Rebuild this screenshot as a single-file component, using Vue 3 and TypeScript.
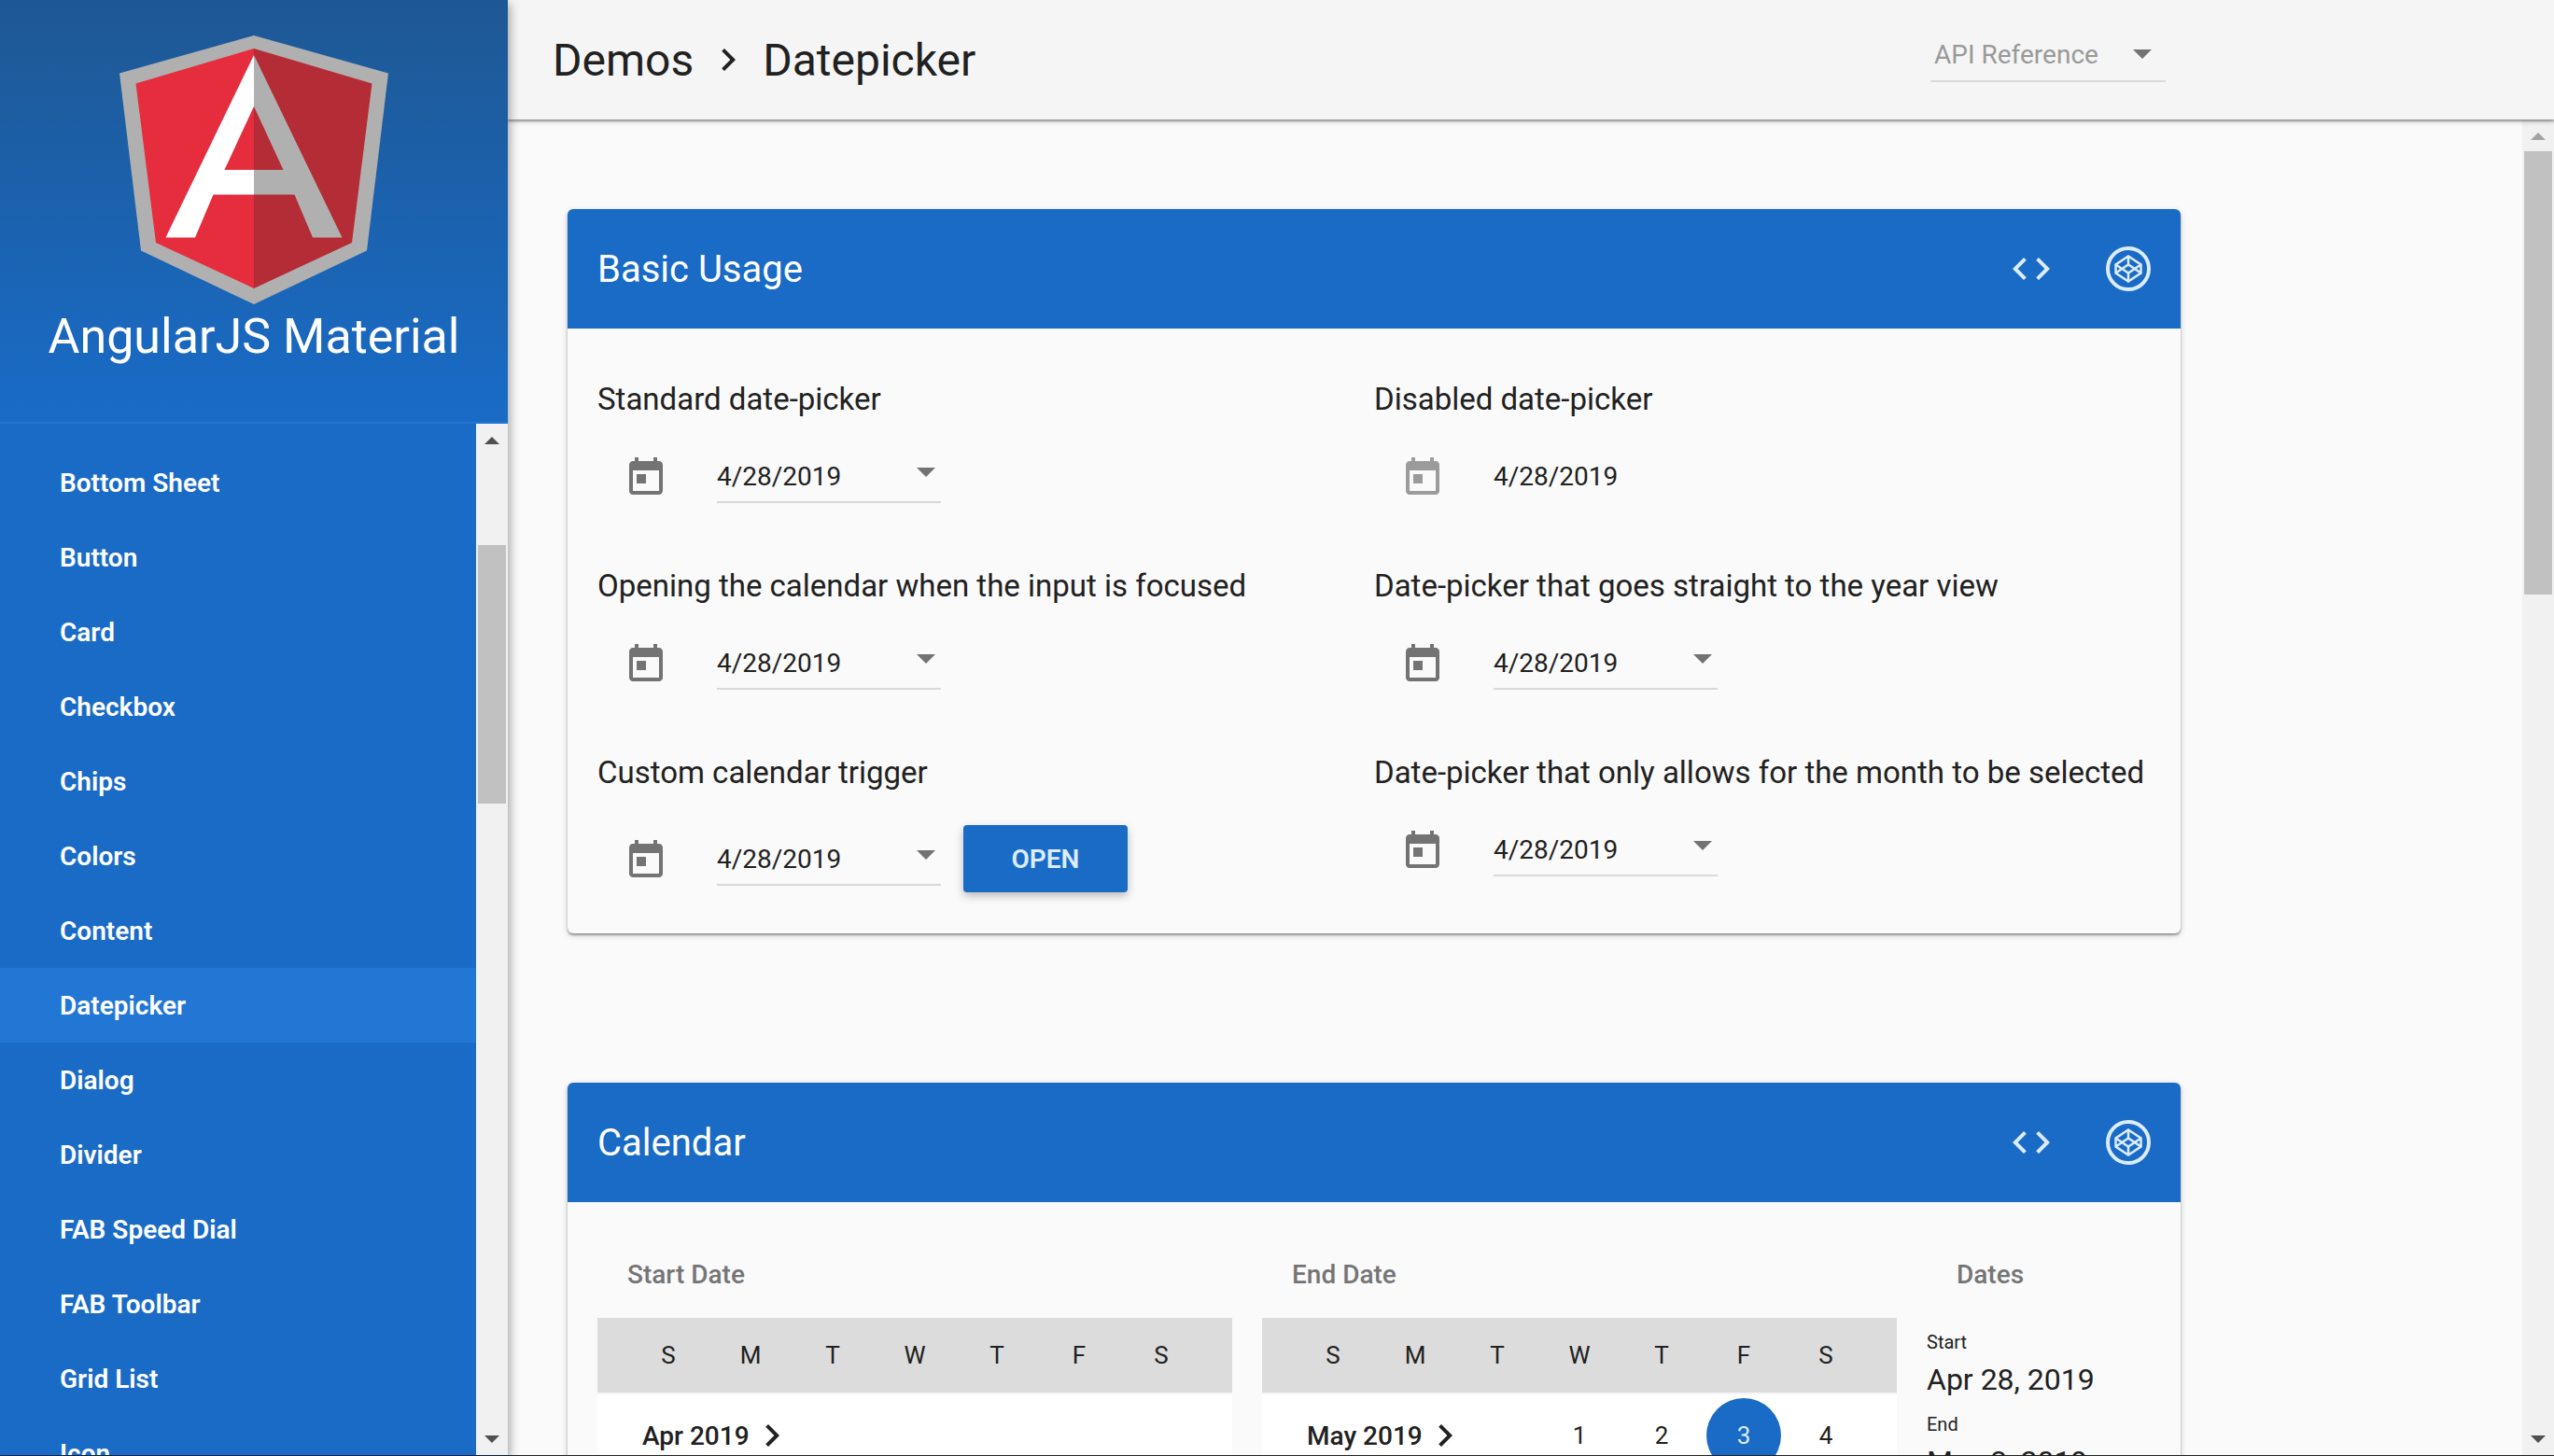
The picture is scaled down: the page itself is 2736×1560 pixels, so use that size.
<script setup lang="ts">
import { ref } from 'vue'

interface Picker {
  id: string
  label: string
  disabled?: boolean
  trigger?: boolean
}

interface MonthPanel {
  title: string
  month: string
  days: number[]
  selected?: number
}

const components = [
  'Bottom Sheet', 'Button', 'Card', 'Checkbox', 'Chips', 'Colors', 'Content', 'Datepicker',
  'Dialog', 'Divider', 'FAB Speed Dial', 'FAB Toolbar', 'Grid List', 'Icon',
]
const active = 'Datepicker'

const pickers: Picker[] = [
  { id: 'standard', label: 'Standard date-picker' },
  { id: 'disabled', label: 'Disabled date-picker', disabled: true },
  { id: 'focus', label: 'Opening the calendar when the input is focused' },
  { id: 'year', label: 'Date-picker that goes straight to the year view' },
  { id: 'custom', label: 'Custom calendar trigger', trigger: true },
  { id: 'month', label: 'Date-picker that only allows for the month to be selected' },
]
const date = ref('4/28/2019')

const weekdays = ['S', 'M', 'T', 'W', 'T', 'F', 'S']
const months: MonthPanel[] = [
  { title: 'Start Date', month: 'Apr 2019', days: [] },
  { title: 'End Date', month: 'May 2019', days: [1, 2, 3, 4], selected: 3 },
]
const range = [
  { term: 'Start', value: 'Apr 28, 2019' },
  { term: 'End', value: 'May 3, 2019' },
]
</script>

<template>
  <div class="app">
    <div class="shell">
      <aside class="sidenav">
        <header class="brand">
          <svg class="logo" viewBox="0 0 288 288" aria-hidden="true">
            <path fill="#b0b0b0" d="M144 0 288 40.500 265 230.500 144 288 23 230.500 0 40.500z" />
            <path fill="#e52d3d" d="M144 14 17.500 51.500 39 222 144 271z" />
            <path fill="#b42c35" d="M144 14 270.500 51.500 249 222 144 271z" />
            <path fill="#fff" d="M144 21 49.500 216.500H81L100.500 170.500H144V144H112.500L144 76z" />
            <path fill="#b0b0b0" d="M144 21 238.500 216.500H207L187.500 170.500H144V144H175.500L144 76z" />
          </svg>
          <h1>AngularJS Material</h1>
        </header>
        <div class="menu">
          <nav class="links">
            <a v-for="name in components" :key="name" href="#" :class="{ active: name === active }">{{ name }}</a>
          </nav>
          <div class="scrollbar">
            <svg class="tip" viewBox="0 0 34 34" aria-hidden="true"><path fill="#505050" d="M9 22 17 14 25 22z" /></svg>
            <div class="track">
              <div class="thumb menu-thumb"></div>
            </div>
            <svg class="tip" viewBox="0 0 34 34" aria-hidden="true"><path fill="#505050" d="M9 13H25L17 21z" /></svg>
          </div>
        </div>
      </aside>

      <main class="main">
        <header class="toolbar">
          <h2 class="crumbs">
            <span>Demos</span>
            <svg class="icon" viewBox="0 0 24 24" aria-hidden="true"><path d="M10 6 8.590 7.410 13.170 12l-4.580 4.590L10 18l6-6z" /></svg>
            <span>Datepicker</span>
          </h2>
          <div class="api">
            <select aria-label="API Reference">
              <option>API Reference</option>
            </select>
            <svg class="caret" viewBox="0 0 20 10" aria-hidden="true"><path d="M0 0H20L10 10z" /></svg>
          </div>
        </header>

        <div class="scroller">
          <div class="content">
            <section class="card">
              <header class="card-head">
                <h3>Basic Usage</h3>
                <button type="button" class="tool" aria-label="View source">
                  <svg class="icon" viewBox="0 0 24 24" aria-hidden="true"><path d="M9.400 16.600 4.800 12l4.600-4.600L8 6l-6 6 6 6zm5.200 0 4.600-4.600-4.600-4.600L16 6l6 6-6 6z" /></svg>
                </button>
                <button type="button" class="tool" aria-label="Edit on CodePen">
                  <svg class="icon line" viewBox="0 0 48 48" aria-hidden="true">
                    <circle cx="24" cy="24" r="22" stroke-width="4" />
                    <path stroke-width="2.500" d="M24 10.500 37.500 19.500V28.500L24 37.500 10.500 28.500V19.500zM24 10.500V19.500M24 28.500V37.500M10.500 19.500 24 28.500 37.500 19.500M10.500 28.500 24 19.500 37.500 28.500" />
                  </svg>
                </button>
              </header>
              <div class="pickers">
                <div v-for="p in pickers" :key="p.id" class="cell">
                  <label :for="p.id">{{ p.label }}</label>
                  <div class="picker-row">
                    <div class="picker">
                      <button type="button" class="cal" :disabled="p.disabled" :aria-label="`Open calendar: ${p.label}`">
                        <svg class="icon" viewBox="0 0 24 24" aria-hidden="true"><path d="M19 3h-1V1h-2v2H8V1H6v2H5c-1.110 0-1.990.9-1.990 2L3 19c0 1.100.890 2 2 2h14c1.100 0 2-.9 2-2V5c0-1.100-.9-2-2-2zm0 16H5V8h14v11zM7 10h5v5H7z" /></svg>
                      </button>
                      <div class="field" :class="{ off: p.disabled }">
                        <input :id="p.id" v-model="date" type="text" :disabled="p.disabled" />
                        <svg v-if="!p.disabled" class="caret" viewBox="0 0 20 10" aria-hidden="true"><path d="M0 0H20L10 10z" /></svg>
                      </div>
                    </div>
                    <button v-if="p.trigger" type="button" class="open">OPEN</button>
                  </div>
                </div>
              </div>
            </section>

            <section class="card">
              <header class="card-head">
                <h3>Calendar</h3>
                <button type="button" class="tool" aria-label="View source">
                  <svg class="icon" viewBox="0 0 24 24" aria-hidden="true"><path d="M9.400 16.600 4.800 12l4.600-4.600L8 6l-6 6 6 6zm5.200 0 4.600-4.600-4.600-4.600L16 6l6 6-6 6z" /></svg>
                </button>
                <button type="button" class="tool" aria-label="Edit on CodePen">
                  <svg class="icon line" viewBox="0 0 48 48" aria-hidden="true">
                    <circle cx="24" cy="24" r="22" stroke-width="4" />
                    <path stroke-width="2.500" d="M24 10.500 37.500 19.500V28.500L24 37.500 10.500 28.500V19.500zM24 10.500V19.500M24 28.500V37.500M10.500 19.500 24 28.500 37.500 19.500M10.500 28.500 24 19.500 37.500 28.500" />
                  </svg>
                </button>
              </header>
              <div class="calendars">
                <div v-for="m in months" :key="m.title" class="panel">
                  <h4>{{ m.title }}</h4>
                  <table>
                    <thead>
                      <tr>
                        <th v-for="(d, i) in weekdays" :key="i">{{ d }}</th>
                      </tr>
                    </thead>
                    <tbody>
                      <tr>
                        <td class="month" :colspan="m.days.length ? 3 : 7">
                          <span class="month-name">
                            {{ m.month }}
                            <svg class="icon" viewBox="0 0 24 24" aria-hidden="true"><path d="M10 6 8.590 7.410 13.170 12l-4.580 4.590L10 18l6-6z" /></svg>
                          </span>
                        </td>
                        <td v-for="d in m.days" :key="d">
                          <span class="day" :class="{ selected: d === m.selected }">{{ d }}</span>
                        </td>
                      </tr>
                    </tbody>
                  </table>
                </div>
                <div class="summary">
                  <h4>Dates</h4>
                  <dl>
                    <div v-for="r in range" :key="r.term">
                      <dt>{{ r.term }}</dt>
                      <dd>{{ r.value }}</dd>
                    </div>
                  </dl>
                </div>
              </div>
            </section>
          </div>
          <div class="scrollbar">
            <svg class="tip" viewBox="0 0 34 34" aria-hidden="true"><path fill="#a3a3a3" d="M9 22 17 14 25 22z" /></svg>
            <div class="track">
              <div class="thumb page-thumb"></div>
            </div>
            <svg class="tip" viewBox="0 0 34 34" aria-hidden="true"><path fill="#505050" d="M9 13H25L17 21z" /></svg>
          </div>
        </div>
      </main>
    </div>
    <div class="edge"></div>
  </div>
</template>

<style>
html,
body {
  margin: 0;
  overflow: hidden;
}
</style>

<style scoped>
.app {
  display: flex;
  flex-direction: column;
  height: 100vh;
  overflow: hidden;
  background: #fafafa;
  color: #212121;
  font-family: Roboto, "Liberation Sans", sans-serif;
  font-size: 28px;
}
.app * {
  box-sizing: border-box;
}
h1, h2, h3, h4, dl, dd {
  margin: 0;
  font-weight: 400;
}
button, input, select {
  margin: 0;
  padding: 0;
  border: 0;
  border-radius: 0;
  outline: 0;
  background: none;
  color: inherit;
  font: inherit;
}
.shell {
  display: flex;
  flex: 1;
  min-height: 0;
}
.edge {
  height: 1px;
  background: linear-gradient(to right, #0c2c50 544px, #222 544px);
}

/* side navigation */
.sidenav {
  position: relative;
  z-index: 2;
  display: flex;
  flex-direction: column;
  flex: none;
  width: 544px;
  background: #196bc6;
  box-shadow: 2px 4px 10px rgba(0, 0, 0, 0.36);
}
.brand {
  display: flex;
  flex-direction: column;
  align-items: center;
  height: 454px;
  padding-top: 38px;
  border-bottom: 2px solid #2276d4;
  background: linear-gradient(to bottom, #1e5894, #196bc6 440px);
  color: #fff;
}
.logo {
  width: 288px;
  height: 288px;
}
.brand h1 {
  font-size: 52px;
  line-height: 70px;
}
.menu {
  display: flex;
  flex: 1;
  min-height: 0;
}
.links {
  display: flex;
  flex-direction: column;
  flex: 1;
  padding-top: 23px;
  overflow: hidden;
}
.links a {
  flex: none;
  height: 80px;
  padding-left: 64px;
  color: #fff;
  font-weight: 600;
  line-height: 82px;
  text-decoration: none;
}
.links a.active {
  background: #2276d4;
}

/* scrollbars */
.scrollbar {
  display: flex;
  flex-direction: column;
  flex: none;
  width: 34px;
  background: #f1f1f1;
}
.tip {
  flex: none;
  width: 34px;
  height: 34px;
}
.track {
  flex: 1;
  padding: 0 2px;
}
.thumb {
  background: #c1c1c1;
}
.menu-thumb {
  height: 277px;
  margin-top: 96px;
}
.page-thumb {
  height: 475px;
}

/* toolbar */
.main {
  display: flex;
  flex-direction: column;
  flex: 1;
  min-width: 0;
}
.toolbar {
  position: relative;
  z-index: 1;
  display: flex;
  align-items: center;
  flex: none;
  height: 128px;
  padding: 0 416px 0 48px;
  background: #f5f5f5;
  box-shadow: 0 2px 6px rgba(0, 0, 0, 0.2), 0 2px 2px rgba(0, 0, 0, 0.3);
}
.crumbs {
  display: flex;
  flex: 1;
  align-items: center;
  gap: 13px;
  font-size: 48px;
}
.icon {
  display: block;
  flex: none;
  width: 48px;
  height: 48px;
  fill: currentColor;
}
.icon.line {
  fill: none;
  stroke: currentColor;
}
.caret {
  flex: none;
  width: 20px;
  height: 10px;
  fill: #737373;
}
.api {
  display: flex;
  align-items: center;
  width: 252px;
  height: 60px;
  margin-bottom: 12px;
  padding-top: 2px;
  border-bottom: 2px solid #d9d9d9;
  color: #999;
}
.api select {
  flex: 1;
  min-width: 0;
  padding-left: 4px;
  appearance: none;
}
.api .caret {
  margin-right: 15px;
}

/* cards */
.scroller {
  display: flex;
  flex: 1;
  min-height: 0;
}
.content {
  flex: 1;
  min-width: 0;
  padding: 96px 64px;
  overflow: hidden;
}
.card {
  max-width: 1728px;
  margin-bottom: 160px;
  border-radius: 6px;
  box-shadow: 0 2px 6px rgba(0, 0, 0, 0.2), 0 2px 2px rgba(0, 0, 0, 0.3);
}
.card-head {
  display: flex;
  align-items: center;
  gap: 56px;
  height: 128px;
  padding: 0 32px;
  border-radius: 6px 6px 0 0;
  background: #196bc6;
  color: #fff;
}
.card-head h3 {
  flex: 1;
  font-size: 40px;
}
.tool {
  color: #dcecff;
}
.pickers {
  display: grid;
  grid-template-columns: 1fr 1fr;
  row-gap: 32px;
  padding: 32px;
}
.cell label {
  display: block;
  font-size: 33px;
  line-height: 88px;
}
.picker-row {
  display: flex;
  align-items: baseline;
}
.picker {
  display: flex;
  align-items: center;
  height: 80px;
  padding-left: 12px;
}
.cal {
  margin-right: 36px;
  padding: 16px;
  color: #737373;
}
.cal:disabled {
  color: #9b9b9b;
}
/* the date text sets the baseline that a trigger button lines up with */
.field {
  display: flex;
  align-items: center;
  align-self: baseline;
  width: 240px;
  height: 54px;
  margin-top: 13px;
  border-bottom: 2px solid #d9d9d9;
}
.field.off {
  border-color: transparent;
}
.field input {
  flex: 1;
  min-width: 0;
  padding-bottom: 2px;
}
.field .caret {
  margin: 0 6px 10px 0;
}
.open {
  width: 176px;
  height: 72px;
  margin: 12px 0 12px 24px;
  border-radius: 4px;
  background: #196bc6;
  box-shadow: 0 4px 10px rgba(0, 0, 0, 0.26);
  color: #dcecff;
  font-weight: 600;
}

/* calendar card */
.calendars {
  display: flex;
  gap: 32px;
  padding: 32px;
}
.panel {
  flex: none;
  width: 680px;
}
.summary {
  flex: 1;
}
h4 {
  padding-left: 32px;
  color: #757575;
  font-size: 28px;
  font-weight: 500;
  line-height: 92px;
}
table {
  width: 100%;
  border-spacing: 0;
  background: #fff;
  font-size: 26px;
  table-layout: fixed;
}
th, td {
  width: 88px;
  padding: 0;
  text-align: center;
}
th {
  height: 80px;
  background: #dcdcdc;
  font-weight: 400;
}
tr > :first-child {
  width: 120px;
  padding-left: 32px;
}
tr > :last-child {
  width: 120px;
  padding-right: 32px;
}
td {
  height: 90px;
  border-top: 2px solid #f5f5f5;
}
.month-name {
  display: flex;
  align-items: center;
  padding-left: 16px;
  font-size: 28px;
  font-weight: 500;
}
.day {
  display: block;
  width: 80px;
  margin: 0 auto;
  border-radius: 50%;
  line-height: 80px;
}
.day.selected {
  background: #196bc6;
  color: #dcecff;
}
dl > div {
  padding-top: 8px;
}
dt {
  font-size: 20px;
  line-height: 36px;
}
dd {
  font-size: 32px;
  line-height: 44px;
}
</style>
